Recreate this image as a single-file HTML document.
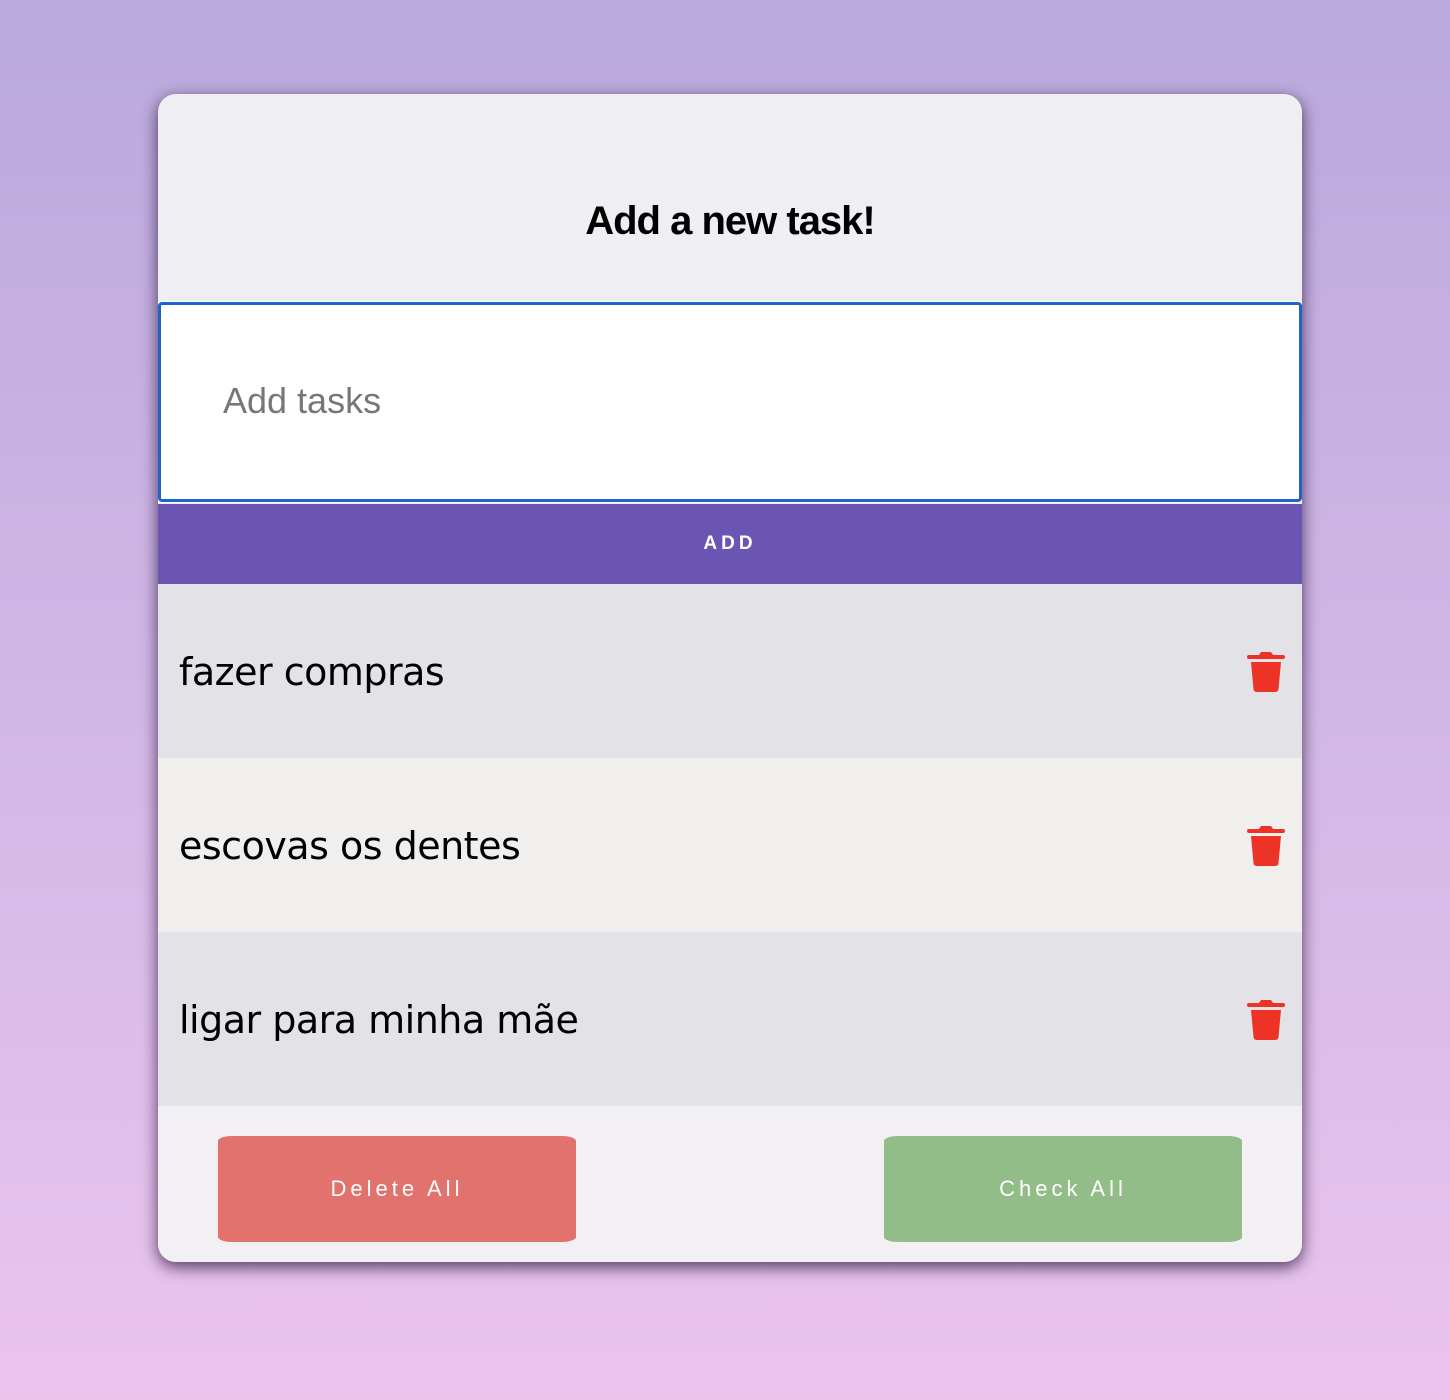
<!DOCTYPE html>
<html><head><meta charset="utf-8"><style>
*{margin:0;padding:0;box-sizing:border-box}
html,body{width:1450px;height:1400px;overflow:hidden}
body{background:linear-gradient(180deg,#b9a9dc 0%,#ebc4ee 100%);font-family:"Liberation Sans",sans-serif;position:relative}
.card{position:absolute;left:158px;top:94px;width:1144px;height:1168px;border-radius:18px;background:#efeef3;box-shadow:0 5px 16px rgba(30,10,50,.75);overflow:hidden}
h1{position:absolute;top:105px;width:100%;text-align:center;font-size:40px;font-weight:bold;letter-spacing:-1px;color:#000}
.inp{position:absolute;left:0;top:208px;width:1144px;height:200px;background:#fff;border:3px solid #2163c6;border-radius:4px;box-shadow:0 0 0 1px #fff}
.inp span{position:absolute;left:62px;top:75px;font-size:36px;color:#777}
.add{position:absolute;left:0;top:410px;width:1144px;height:80px;background:#6b55b3;color:#fff;font-weight:bold;font-size:19px;letter-spacing:4px;text-align:center;line-height:80px}
.row{position:absolute;left:0;width:1144px;height:174px}
.row span{position:absolute;left:21px;top:66px;font-family:"DejaVu Sans",sans-serif;font-size:38px;color:#000;letter-spacing:-0.5px}
.row svg{position:absolute;left:1089px;top:66px}
.btn{position:absolute;top:1042px;width:358px;height:106px;border-radius:14px/5px;color:#fff;font-size:22px;letter-spacing:4px;text-align:center;line-height:106px}
</style></head><body>
<div class="card">
<h1>Add a new task!</h1>
<div class="inp"><span>Add tasks</span></div>
<div class="add">ADD</div>
<div class="row" style="top:490px;background:#e2e2e7"><span>fazer compras</span><svg width="38" height="42" viewBox="0 0 38 42"><path d="M14 2h10l2 3h10a2 2 0 0 1 0 4H2a2 2 0 0 1 0-4h10z" fill="#ec3326"/><path d="M4 12h30l-2.5 27a3 3 0 0 1-3 3h-19a3 3 0 0 1-3-3z" fill="#ec3326"/></svg></div>
<div class="row" style="top:664px;background:#f1eeee"><span>escovas os dentes</span><svg width="38" height="42" viewBox="0 0 38 42"><path d="M14 2h10l2 3h10a2 2 0 0 1 0 4H2a2 2 0 0 1 0-4h10z" fill="#ec3326"/><path d="M4 12h30l-2.5 27a3 3 0 0 1-3 3h-19a3 3 0 0 1-3-3z" fill="#ec3326"/></svg></div>
<div class="row" style="top:838px;background:#e2e2e7"><span>ligar para minha mãe</span><svg width="38" height="42" viewBox="0 0 38 42"><path d="M14 2h10l2 3h10a2 2 0 0 1 0 4H2a2 2 0 0 1 0-4h10z" fill="#ec3326"/><path d="M4 12h30l-2.5 27a3 3 0 0 1-3 3h-19a3 3 0 0 1-3-3z" fill="#ec3326"/></svg></div>
<div style="position:absolute;left:0;top:1012px;width:1144px;height:156px;background:#f3f0f4"></div>
<div class="btn" style="left:60px;background:#e1726e">Delete All</div>
<div class="btn" style="left:726px;background:#92bc88">Check All</div>
</div>
</body></html>
